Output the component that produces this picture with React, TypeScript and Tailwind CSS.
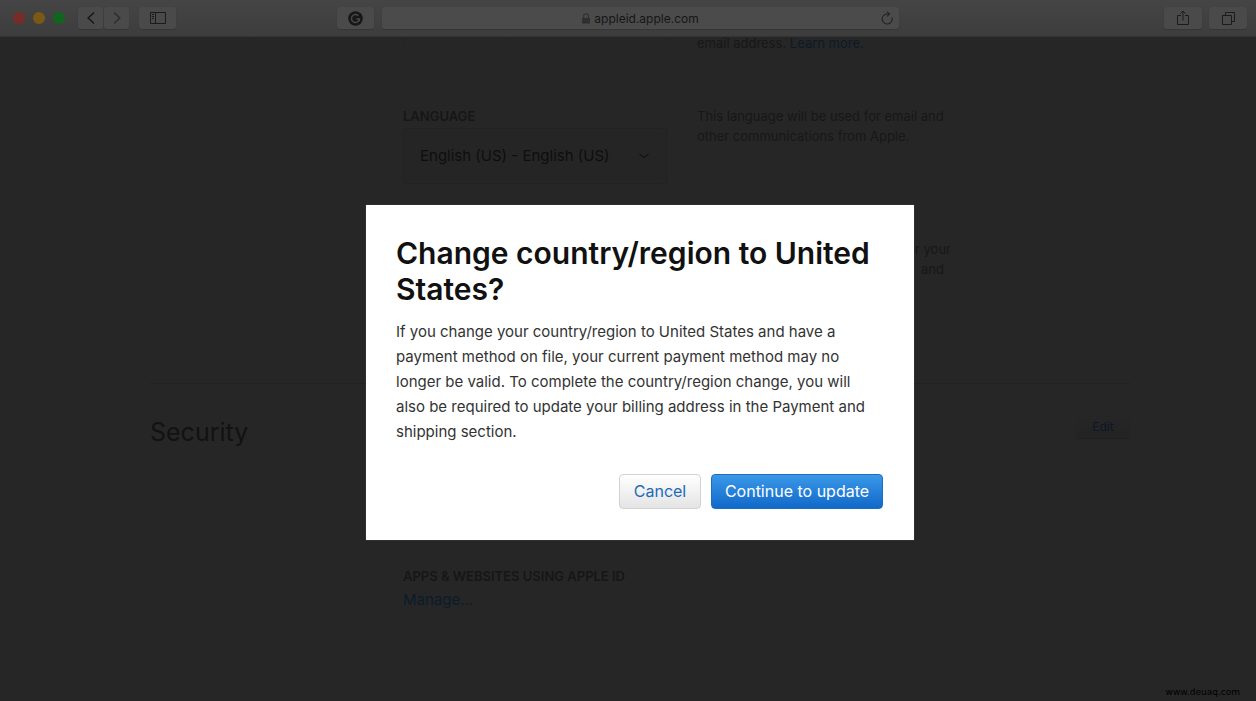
import type { ReactNode } from "react";

function ToolButton({ label, children, className = "w-[38px]" }: { label: string; children: ReactNode; className?: string }) {
  return (
    <button
      type="button"
      aria-label={label}
      className={`flex h-[22px] shrink-0 items-center justify-center rounded-[3px] bg-[#4a4a4a] text-[#1b1b1b] shadow-[0_1px_1px_#363636] ${className}`}
    >
      {children}
    </button>
  );
}

function BrowserBar() {
  return (
    <header className="relative z-10 grid h-[37px] shrink-0 grid-cols-[324fr_562fr_348fr] items-center border-b border-[#343434] bg-linear-to-b from-[#454545] to-[#3d3d3d] pr-[9px] pl-[13px]">
      <div className="flex items-center">
        <div className="flex gap-2">
          <span className="size-3 rounded-full bg-[#782c28]" />
          <span className="size-3 rounded-full bg-[#7a5914]" />
          <span className="size-3 rounded-full bg-[#12641f]" />
        </div>
        <div className="ml-[13px] flex gap-px">
          <ToolButton label="Back" className="w-[25px]">
            <svg width="10" height="14" viewBox="0 0 10 14" fill="none" stroke="#181818" strokeWidth="1.5">
              <path d="M8 1.5 2.2 7 8 12.5" />
            </svg>
          </ToolButton>
          <ToolButton label="Forward" className="w-[25px]">
            <svg width="10" height="14" viewBox="0 0 10 14" fill="none" stroke="#2e2e2e" strokeWidth="1.5">
              <path d="M2 1.5 7.8 7 2 12.5" />
            </svg>
          </ToolButton>
        </div>
        <ToolButton label="Show sidebar" className="ml-[10px] w-[37px]">
          <svg width="16" height="12" viewBox="0 0 16 12" fill="none" stroke="currentColor">
            <path d="M.5.5h15v11H.5zM5.5.5v11M2 2.5h2M2 4.5h2M2 6.5h2" />
          </svg>
        </ToolButton>
      </div>

      <div className="flex items-center gap-2">
        <ToolButton label="Grammarly" className="w-[37px]">
          <svg width="15" height="15" viewBox="0 0 15 15">
            <circle cx="7.5" cy="7.5" r="7.3" fill="#171717" />
            <path d="M10.3 4.7A4 4 0 1 0 11.4 8.1H8.4" fill="none" stroke="#464646" strokeWidth="1.5" />
            <path d="M11.4 7.4v2.8" fill="none" stroke="#464646" strokeWidth="1.3" />
          </svg>
        </ToolButton>
        <div className="flex h-[22px] flex-1 items-center rounded-[3px] bg-[#4b4b4b] pr-[6px] pl-[18px] shadow-[0_1px_1px_#363636]">
          <div className="flex flex-1 items-center justify-center gap-1 pt-px">
            <svg width="8" height="11" viewBox="0 0 8 11">
              <path d="M0 5h8v5.5H0z" fill="#2f2f2f" />
              <path d="M1.7 5V3a2.3 2.3 0 0 1 4.6 0v2" fill="none" stroke="#2f2f2f" strokeWidth="1.1" />
            </svg>
            <input
              aria-label="Address"
              defaultValue="appleid.apple.com"
              className="field-sizing-content bg-transparent text-xs text-[#161616] outline-none"
            />
          </div>
          <button type="button" aria-label="Reload" className="text-[#222222]">
            <svg width="12" height="14" viewBox="0 0 12 14" fill="none" stroke="currentColor" strokeWidth="1.1">
              <path d="M10.9 6.4A5 5 0 1 1 6 3h2.3" />
              <path d="M6 .8 8.6 3 6 5.4" />
            </svg>
          </button>
        </div>
      </div>

      <div className="flex justify-end gap-[7px]">
        <ToolButton label="Share">
          <svg width="12" height="16" viewBox="0 0 12 16" fill="none" stroke="currentColor">
            <path d="M4 5.5H.5v9h11v-9H8M6 10.5V1.2M3.4 3.6 6 1l2.6 2.6" />
          </svg>
        </ToolButton>
        <ToolButton label="Show all tabs">
          <svg width="13" height="13" viewBox="0 0 13 13" fill="none" stroke="currentColor">
            <path d="M.5 3.5h9v9h-9zM3.5 3.5v-3h9v9h-3" />
          </svg>
        </ToolButton>
      </div>
    </header>
  );
}

function AccountPage() {
  return (
    <div className="pl-6">
      <div className="mx-auto max-w-[980px]">
        <section className="h-[347px] border-b border-[#212121] pl-[253px]">
          <div className="flex h-[69px] gap-[30px]">
            <div className="h-2 w-[264px] border-x border-[#232323]" />
            <p className="text-[13px] leading-3 text-[#171717]">
              email address.{" "}
              <a href="#learn" className="text-[#0c1a28]">
                Learn more.
              </a>
            </p>
          </div>
          <div className="flex gap-[30px]">
            <div className="w-[264px]">
              <label htmlFor="language" className="block text-[13px] leading-5 font-semibold text-[#161616]">
                LANGUAGE
              </label>
              <div className="mt-[2px] grid items-center rounded-sm border border-[#222222] bg-[#252525]">
                <select
                  id="language"
                  className="col-start-1 row-start-1 h-[54px] w-full appearance-none bg-transparent pl-4 text-[15px] text-[#0e0e0e] outline-none"
                >
                  <option>English (US) - English (US)</option>
                </select>
                <svg className="pointer-events-none col-start-1 row-start-1 mr-4 justify-self-end" width="12" height="8" viewBox="0 0 12 8" fill="none" stroke="#131313" strokeWidth="1.1">
                  <path d="M1.5 2 6 5.5 10.5 2" />
                </svg>
              </div>
            </div>
            <p className="w-[256px] text-[13px] leading-5 text-[#171717]">
              This language will be used for email and other communications from Apple.
            </p>
          </div>
          <div className="mt-[55px] ml-[294px] w-[254px] text-right text-[13px] leading-5 text-[#171717]">
            <p>for your</p>
            <p className="pr-[7px]">and</p>
          </div>
        </section>

        <section className="flex pt-7">
          <h2 className="w-[253px] text-[25px] leading-10 text-[#121212]">Security</h2>
          <div className="flex-1 pt-[154px]">
            <h3 className="text-[13px] leading-5 font-semibold text-[#161616]">APPS &amp; WEBSITES USING APPLE ID</h3>
            <a href="#manage" className="mt-[2px] inline-block text-[15px] leading-6 text-[#0a1c2c]">
              Manage...
            </a>
          </div>
          <button type="button" className="mt-[3px] h-[23px] w-[54px] rounded-sm bg-linear-to-b from-[#262626] to-[#232323] text-xs text-[#0c1728] shadow-[0_1px_0_#202020]">
            Edit
          </button>
        </section>
      </div>
    </div>
  );
}

function RegionDialog() {
  return (
    <div className="absolute inset-0 flex items-center justify-center pt-[7px] pl-6">
      <div role="dialog" aria-modal="true" aria-labelledby="dialog-title" className="w-[548px] bg-white px-[30px] pt-[30px] pb-[31px] shadow-[0_0_1px_#666666]">
        <h1 id="dialog-title" className="text-[30px] leading-9 font-semibold text-[#111111]">
          Change country/region to United States?
        </h1>
        <p className="mt-3 pr-2 text-[15px] leading-[25px] text-[#333333]">
          If you change your country/region to United States and have a payment method on file, your current payment method may no longer be valid. To complete the country/region change, you will also be required to update your billing address in the Payment and shipping section.
        </p>
        <div className="mt-[30px] flex justify-end gap-[10px] pr-px">
          <button type="button" className="h-[35px] w-[82px] rounded-sm border border-[#d2d2d2] bg-linear-to-b from-white to-[#e4e4e4] pb-0.5 text-base text-[#1c6bb8]">
            Cancel
          </button>
          <button type="button" className="h-[35px] w-[172px] rounded-sm border border-[#1a6fc0] bg-linear-to-b from-[#3a98e8] to-[#1069c9] pb-0.5 text-base text-white">
            Continue to update
          </button>
        </div>
      </div>
    </div>
  );
}

export default function App() {
  return (
    <div className="flex h-screen flex-col bg-[#262626] font-[Inter,sans-serif]">
      <BrowserBar />
      <main className="relative flex-1 overflow-hidden">
        <AccountPage />
        <RegionDialog />
        <small className="absolute right-4 bottom-[3px] font-['DejaVu_Sans',sans-serif] text-[9px] leading-3 text-black">www.deuaq.com</small>
      </main>
    </div>
  );
}
